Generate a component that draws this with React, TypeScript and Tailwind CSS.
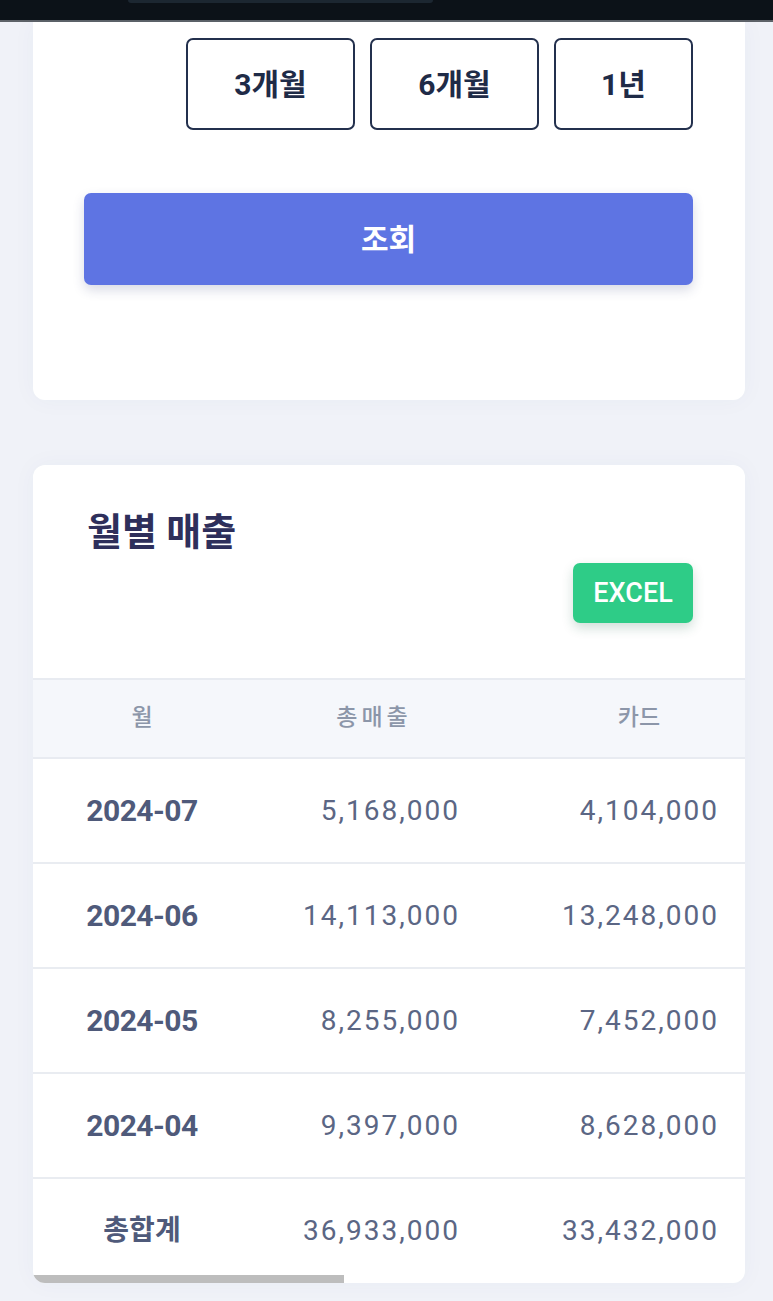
import React from "react";

const rows = [
  { month: "2024-07", total: "5,168,000", card: "4,104,000" },
  { month: "2024-06", total: "14,113,000", card: "13,248,000" },
  { month: "2024-05", total: "8,255,000", card: "7,452,000" },
  { month: "2024-04", total: "9,397,000", card: "8,628,000" },
];

const font = { fontFamily: 'Roboto, "Noto Sans CJK KR", "Noto Sans", sans-serif' };

export default function App() {
  return (
    <div className="min-h-[1301px] w-[773px] bg-[#f0f2f8] overflow-hidden" style={font}>
      {/* status bar */}
      <div className="relative h-[20px] bg-[#0c1218]">
        <div className="absolute left-[128px] top-0 h-[3px] w-[305px] rounded-b-full bg-[#1c2731]" />
      </div>
      <div className="h-[2px] bg-[#5d6268]" />

      {/* search card */}
      <div className="mx-[33px] w-[712px] rounded-b-[12px] bg-white pt-[16px] pb-[115px] pl-[51px] pr-[52px] shadow-[0_0_24px_rgba(60,70,120,0.04)]">
        <div className="flex justify-end gap-[15px]">
          <button className="flex h-[92px] w-[169px] items-center justify-center rounded-[7px] border-2 border-[#23304d] bg-white text-[30px] font-bold text-[#1f2b47]">
            3개월
          </button>
          <button className="flex h-[92px] w-[169px] items-center justify-center rounded-[7px] border-2 border-[#23304d] bg-white text-[30px] font-bold text-[#1f2b47]">
            6개월
          </button>
          <button className="flex h-[92px] w-[139px] items-center justify-center rounded-[7px] border-2 border-[#23304d] bg-white text-[30px] font-bold text-[#1f2b47]">
            1년
          </button>
        </div>
        <button className="mt-[63px] flex h-[92px] w-full items-center justify-center rounded-[7px] bg-[#5e74e3] text-[30px] font-semibold text-white shadow-[0_5px_12px_rgba(40,50,110,0.18)]">
          조회
        </button>
      </div>

      {/* monthly sales card */}
      <div className="relative mx-[33px] mt-[65px] w-[712px] overflow-hidden rounded-[12px] bg-white shadow-[0_0_24px_rgba(60,70,120,0.04)]">
        <div className="pt-[45px] pl-[54px] pr-[52px] pb-[55px]">
          <h2 className="text-[38px] font-bold leading-[44px] text-[#2e2f5b]">월별 매출</h2>
          <div className="mt-[9px] flex justify-end">
            <button className="flex h-[60px] w-[120px] items-center justify-center rounded-[7px] bg-[#2ecc87] text-[27px] font-medium text-white shadow-[0_5px_12px_rgba(20,90,60,0.2)]">
              EXCEL
            </button>
          </div>
        </div>

        <div className="w-[712px] overflow-hidden">
          <div className="w-[1636px]">
            {/* header */}
            <div className="flex h-[81px] items-center border-t-2 border-b-2 border-[#e8ebf1] bg-[#f5f7fb] text-[23px] font-medium text-[#8c96a9]">
              <div className="w-[218px] text-center">월</div>
              <div className="w-[246px] text-center tracking-[4px]">총매출</div>
              <div className="w-[284px] text-center">카드</div>
              <div className="flex-1" />
            </div>
            {rows.map((r) => (
              <div key={r.month} className="flex h-[105px] items-center border-b-2 border-[#e9ecf1]">
                <div className="w-[218px] text-center text-[30px] font-bold tracking-[-0.5px] text-[#4f5a7a]">{r.month}</div>
                <div className="w-[246px] pr-[37px] text-right text-[28px] tracking-[2px] text-[#5b6684]">{r.total}</div>
                <div className="w-[284px] pr-[62px] text-right text-[28px] tracking-[2px] text-[#5b6684]">{r.card}</div>
                <div className="flex-1" />
              </div>
            ))}
            <div className="flex h-[104px] items-center">
              <div className="w-[218px] text-center text-[28px] font-bold text-[#4f5a7a]">총합계</div>
              <div className="w-[246px] pr-[37px] text-right text-[28px] tracking-[2px] text-[#5b6684]">36,933,000</div>
              <div className="w-[284px] pr-[62px] text-right text-[28px] tracking-[2px] text-[#5b6684]">33,432,000</div>
              <div className="flex-1" />
            </div>
          </div>
        </div>
        {/* overlay scrollbar */}
        <div className="absolute bottom-0 left-0 h-[8px] w-[311px] bg-[#bdbdbd]" />
      </div>
    </div>
  );
}
